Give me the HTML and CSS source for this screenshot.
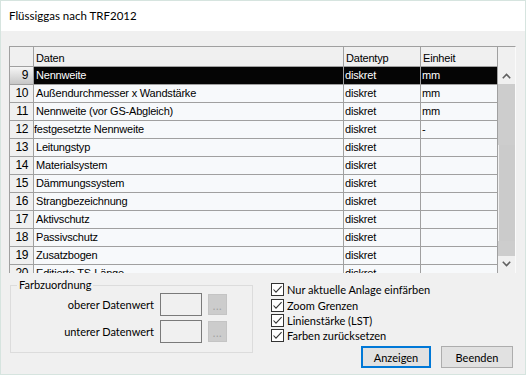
FILE: index.html
```html
<!DOCTYPE html>
<html lang="de">
<head>
<meta charset="utf-8">
<title>Flüssiggas nach TRF2012</title>
<link rel="stylesheet" href="styles.css">
</head>
<body>
<div class="window">
  <div class="titlebar">Flüssiggas nach TRF2012</div>
  <div class="content">
    <div class="grid">
      <div class="table">
        <div class="hcell corner"></div>
        <div class="hcell">Daten</div>
        <div class="hcell">Datentyp</div>
        <div class="hcell">Einheit</div>

        <div class="rh sel">9</div>
        <div class="cell sel">Nennweite</div>
        <div class="cell sel narrow">diskret</div>
        <div class="cell sel narrow">mm</div>

        <div class="rh">10</div>
        <div class="cell">Außendurchmesser x Wandstärke</div>
        <div class="cell narrow">diskret</div>
        <div class="cell narrow">mm</div>

        <div class="rh">11</div>
        <div class="cell">Nennweite (vor GS-Abgleich)</div>
        <div class="cell narrow">diskret</div>
        <div class="cell narrow">mm</div>

        <div class="rh">12</div>
        <div class="cell tight">festgesetzte Nennweite</div>
        <div class="cell narrow">diskret</div>
        <div class="cell narrow">-</div>

        <div class="rh">13</div>
        <div class="cell">Leitungstyp</div>
        <div class="cell narrow">diskret</div>
        <div class="cell narrow"></div>

        <div class="rh">14</div>
        <div class="cell">Materialsystem</div>
        <div class="cell narrow">diskret</div>
        <div class="cell narrow"></div>

        <div class="rh">15</div>
        <div class="cell">Dämmungssystem</div>
        <div class="cell narrow">diskret</div>
        <div class="cell narrow"></div>

        <div class="rh">16</div>
        <div class="cell">Strangbezeichnung</div>
        <div class="cell narrow">diskret</div>
        <div class="cell narrow"></div>

        <div class="rh">17</div>
        <div class="cell">Aktivschutz</div>
        <div class="cell narrow">diskret</div>
        <div class="cell narrow"></div>

        <div class="rh">18</div>
        <div class="cell">Passivschutz</div>
        <div class="cell narrow">diskret</div>
        <div class="cell narrow"></div>

        <div class="rh">19</div>
        <div class="cell">Zusatzbogen</div>
        <div class="cell narrow">diskret</div>
        <div class="cell narrow"></div>

        <div class="rh">20</div>
        <div class="cell">Editierte TS-Länge</div>
        <div class="cell narrow">diskret</div>
        <div class="cell narrow"></div>
      </div>
      <div class="vscroll">
        <div class="sb-head"></div>
        <div class="sb-btn sb-up">
          <svg width="9" height="6" viewBox="0 0 9 6"><polyline points="0.8,5.2 4.5,1.5 8.2,5.2" fill="none" stroke="#606060" stroke-width="1.6"/></svg>
        </div>
        <div class="sb-thumb"></div>
        <div class="sb-track"></div>
        <div class="sb-thumb2"></div>
        <div class="sb-btn sb-down">
          <svg width="9" height="6" viewBox="0 0 9 6"><polyline points="0.8,0.8 4.5,4.5 8.2,0.8" fill="none" stroke="#606060" stroke-width="1.6"/></svg>
        </div>
      </div>
    </div>

    <div class="bottom">
      <fieldset class="group">
        <legend>Farbzuordnung</legend>
        <div class="group-grid">
          <span class="lbl">oberer Datenwert</span>
          <span class="colorbox"></span>
          <span class="dots">...</span>
          <span class="lbl">unterer Datenwert</span>
          <span class="colorbox"></span>
          <span class="dots">...</span>
        </div>
      </fieldset>

      <div class="right">
        <div class="checks">
          <label class="chk"><span class="box"><svg width="11" height="11" viewBox="0 0 11 11"><polyline points="1.5,5.5 4,8.2 9.6,2.2" fill="none" stroke="#333" stroke-width="1.1"/></svg></span>Nur aktuelle Anlage einfärben</label>
          <label class="chk"><span class="box"><svg width="11" height="11" viewBox="0 0 11 11"><polyline points="1.5,5.5 4,8.2 9.6,2.2" fill="none" stroke="#333" stroke-width="1.1"/></svg></span>Zoom Grenzen</label>
          <label class="chk"><span class="box"><svg width="11" height="11" viewBox="0 0 11 11"><polyline points="1.5,5.5 4,8.2 9.6,2.2" fill="none" stroke="#333" stroke-width="1.1"/></svg></span>Linienstärke (LST)</label>
          <label class="chk"><span class="box"><svg width="11" height="11" viewBox="0 0 11 11"><polyline points="1.5,5.5 4,8.2 9.6,2.2" fill="none" stroke="#333" stroke-width="1.1"/></svg></span>Farben zurücksetzen</label>
        </div>
        <div class="buttons">
          <button class="btn primary">Anzeigen</button>
          <button class="btn wide">Beenden</button>
        </div>
      </div>
    </div>
  </div>
</div>
</body>
</html>
```
FILE: styles.css
```css
* { box-sizing: border-box; }
html, body { margin: 0; padding: 0; }
body { background: #f0f0f0; }

.window {
  width: 526px;
  height: 375px;
  border: 1px solid #d6e4df;
  background: #f0f0f0;
  display: flex;
  flex-direction: column;
  overflow: hidden;
}

.titlebar {
  height: 30px;
  flex: none;
  background: #ffffff;
  padding-left: 8px;
  font: 11.5px/30px "Lato", sans-serif;
  color: #000;
}

.content {
  flex: 1;
  padding: 15px 9px 0 8px;
}

/* data grid */
.grid {
  display: flex;
  width: 507px;
  height: 227px;
  border-top: 1px solid #a0a0a0;
  border-left: 1px solid #a0a0a0;
  border-right: 1px solid #fafafa;
  overflow: hidden;
}

.table {
  width: 488px;
  height: 226px;
  padding-right: 1px;
  display: grid;
  grid-template-columns: 23px 309px 76px 76px;
  grid-template-rows: 19px;
  grid-auto-rows: 17px;
  gap: 1px;
  align-content: start;
  background: #a0a0a0;
  overflow: hidden;
  font: 11px/17px "Liberation Sans", Arial, sans-serif;
  letter-spacing: -0.2px;
  color: #000;
}

.hcell {
  background: #f0f0f0;
  padding: 3px 0 0 2px;
  line-height: 16px;
  white-space: nowrap;
}

.rh {
  background: #f0f0f0;
  text-align: right;
  padding-right: 5px;
  font: 12px/17px "Liberation Sans", Arial, sans-serif;
  letter-spacing: -0.4px;
}
.rh.sel {
  background: linear-gradient(#f6f6f6, #c6c6c6);
}

.cell {
  background: #f7f9fb;
  padding-left: 2px;
  white-space: nowrap;
  overflow: hidden;
}
.cell.narrow { padding-left: 1px; }
.cell.tight { padding-left: 0; }
.cell.sel {
  background: #050505;
  color: #ffffff;
}

/* vertical scrollbar */
.vscroll {
  width: 17px;
  height: 226px;
  flex: none;
  display: flex;
  flex-direction: column;
  background: #f0f0f0;
}
.sb-head { height: 19px; }
.sb-btn {
  display: flex;
  align-items: center;
  justify-content: center;
}
.sb-up { height: 18px; padding-top: 2px; }
.sb-thumb { height: 61px; background: #cdcdcd; }
.sb-track { height: 96px; background: #cbcbcb; margin-left: 1px; }
.sb-thumb2 { height: 15px; background: #cdcdcd; }
.sb-down { height: 17px; padding-bottom: 1px; }

/* bottom area */
.bottom {
  display: flex;
  align-items: flex-start;
  margin-top: 5px;
  font: 11px "Lato", sans-serif;
  color: #000;
}

.group {
  width: 243px;
  height: 75px;
  margin: 0 0 0 1px;
  padding: 0 0 9px 6px;
  border: 1px solid #dcdcdc;
}
.group legend {
  padding: 0 2px;
  line-height: 14px;
}

.group-grid {
  margin-top: 1px;
  display: grid;
  grid-template-columns: 137px 42px 19px;
  grid-auto-rows: 23px;
  column-gap: 6px;
  row-gap: 4px;
  align-items: center;
}
.lbl {
  text-align: right;
  line-height: 23px;
}
.colorbox {
  height: 23px;
  border: 1px solid #7a7a7a;
  background: #f0f0f0;
}
.dots {
  height: 21px;
  background: #cccccc;
  border: 1px solid #c4c4c4;
  color: #a2a2a2;
  text-align: center;
  line-height: 21px;
  letter-spacing: 0.5px;
}

.right {
  flex: 1;
  margin: 5px 3px 0 18px;
  display: flex;
  flex-direction: column;
}
.checks {
  display: grid;
  grid-template-rows: 16px 15px 15px 15px;
}
.chk {
  display: flex;
  align-items: flex-start;
  line-height: 13px;
  white-space: nowrap;
}
.box {
  width: 13px;
  height: 13px;
  flex: none;
  border: 1px solid #333333;
  background: #ffffff;
  margin-right: 3px;
  display: flex;
  align-items: center;
  justify-content: center;
}
.box svg { display: block; }

.buttons {
  margin-top: 2px;
  display: flex;
  justify-content: flex-end;
  gap: 10px;
}
.btn {
  width: 70px;
  height: 22px;
  padding: 0;
  background: #e1e1e1;
  border: 1px solid #adadad;
  font: 11px "Lato", sans-serif;
  color: #000;
}
.btn.wide { width: 72px; }
.btn.primary { border: 2px solid #0078d7; }
```
